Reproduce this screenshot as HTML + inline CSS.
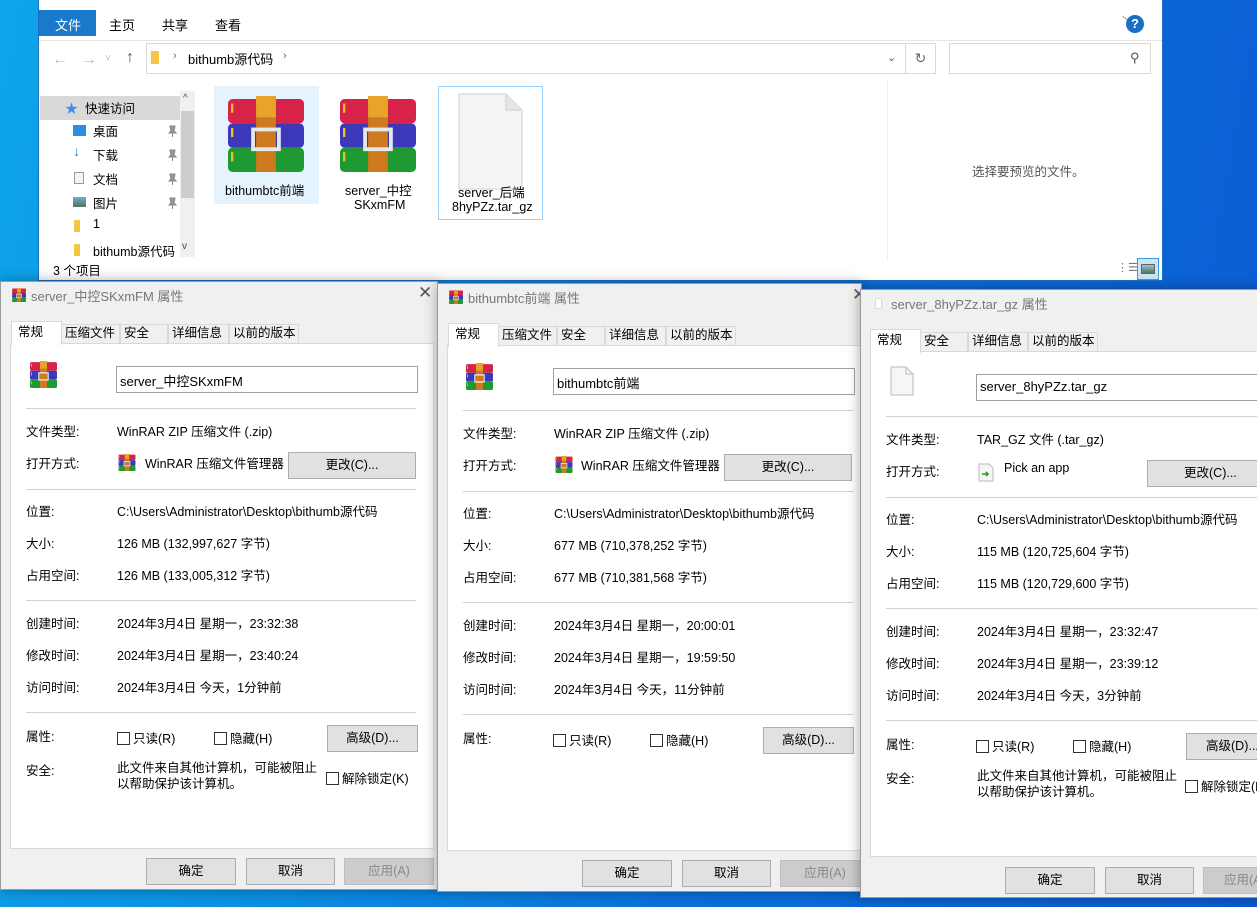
<!DOCTYPE html>
<html><head><meta charset="utf-8">
<style>
*{margin:0;padding:0;box-sizing:border-box}
body{width:1257px;height:907px;overflow:hidden;position:relative;font-family:"Liberation Sans","Noto Sans CJK SC",sans-serif;font-size:12.5px;color:#000;
background:linear-gradient(100deg,#0ea4ea 0%,#0a8ee3 30%,#0b6fd9 60%,#0b5bd3 100%)}
.a{position:absolute;white-space:nowrap}
.ex{position:absolute;left:38px;top:-2px;width:1125px;height:283px;background:#fff;border:1px solid #1c6fbf}
.dlg{position:absolute;width:425px;height:609px;background:#f0f0f0;border:1px solid #9a9a9a;box-shadow:0 0 12px rgba(0,0,0,.35);overflow:hidden}
.dlg .a{margin-top:-3px}
.tt{top:7px;left:30px;color:#777;font-size:13px}
.tab{position:absolute;top:42px;height:20px;background:#f0f0f0;border:1px solid #d9d9d9;font-size:12.5px;line-height:17px;padding:0 0 0 3px;overflow:hidden}
.tab.on{top:39px;height:24px;background:#fff;border-bottom:none;z-index:2;padding:2px 0 0 6px}
.pnl{position:absolute;left:9px;top:61px;width:424px;height:506px;background:#fff;border:1px solid #d9d9d9}
.inp{position:absolute;left:115px;top:84px;width:302px;height:27px;border:1px solid #a0a0a0;background:#fff;padding:4px 0 0 3px;font-size:13px}
.sep{position:absolute;left:25px;width:390px;height:1px;background:#d0d0d0}
.btn{position:absolute;height:27px;background:#e1e1e1;border:1px solid #adadad;text-align:center;line-height:25px;font-size:12.5px}
.cb{display:inline-block;width:13px;height:13px;border:1px solid #333;background:#fff;vertical-align:-2px;margin-right:3px}
.lb{left:25px}.vl{left:116px}
.pin{position:absolute;left:128px;width:10px;height:12px}
</style></head><body>

<svg width="0" height="0" style="position:absolute">
<defs>
<g id="rar">
<rect x="0" y="0" width="100" height="32" rx="6" fill="#d7234a"/>
<rect x="0" y="32" width="100" height="32" rx="6" fill="#3b38b9"/>
<rect x="0" y="64" width="100" height="32" rx="6" fill="#1f9a32"/>
<rect x="4" y="6" width="3" height="12" fill="#f6c21c"/><rect x="4" y="38" width="3" height="12" fill="#f6c21c"/><rect x="4" y="70" width="3" height="12" fill="#f6c21c"/>
<rect x="37" y="-4" width="26" height="100" fill="#cf7a1e"/>
<rect x="37" y="-4" width="26" height="28" fill="#e8a42a"/>
<rect x="33" y="40" width="34" height="26" fill="none" stroke="#e8e8e8" stroke-width="5"/>
</g>
<g id="pin"><path d="M3 1H8L7 6L9 8H2L4 6Z M5.5 8V12" fill="#999" stroke="#888" stroke-width="1"/></g>
</defs></svg>

<!-- Explorer -->
<div class="ex">
 <div class="a" style="left:0;top:11px;width:57px;height:26px;background:#1979ca;color:#fff;font-size:13px;padding:5px 0 0 16px">文件</div>
 <div class="a" style="left:70px;top:16px;font-size:13px">主页</div>
 <div class="a" style="left:123px;top:16px;font-size:13px">共享</div>
 <div class="a" style="left:176px;top:16px;font-size:13px">查看</div>
 <div class="a" style="left:1083px;top:14px;color:#888;font-size:12px">﹀</div>
 <div class="a" style="left:1087px;top:16px;width:18px;height:18px;border-radius:50%;background:#1a6fc4;color:#fff;font-weight:bold;text-align:center;line-height:18px;font-size:13px">?</div>
 <div class="a" style="left:0;top:41px;width:1123px;height:1px;background:#e5e5e5"></div>
 <div class="a" style="left:13px;top:52px;color:#bbb;font-size:16px">←</div>
 <div class="a" style="left:42px;top:52px;color:#bbb;font-size:16px">→</div>
 <div class="a" style="left:66px;top:54px;color:#bbb;font-size:10px">˅</div>
 <div class="a" style="left:87px;top:50px;color:#555;font-size:16px">↑</div>
 <div class="a" style="left:107px;top:44px;width:760px;height:31px;border:1px solid #d9d9d9"></div>
 <div class="a" style="left:112px;top:52px;width:8px;height:13px;background:#f3c643"></div>
 <div class="a" style="left:134px;top:51px;color:#666;font-size:11px">›</div>
 <div class="a" style="left:149px;top:50px;font-size:13px">bithumb源代码</div>
 <div class="a" style="left:244px;top:51px;color:#666;font-size:11px">›</div>
 <div class="a" style="left:848px;top:52px;color:#555;font-size:11px">⌄</div>
 <div class="a" style="left:866px;top:44px;width:31px;height:31px;border:1px solid #d9d9d9;text-align:center;line-height:29px;color:#666;font-size:14px">↻</div>
 <div class="a" style="left:910px;top:44px;width:202px;height:31px;border:1px solid #d9d9d9"></div>
 <div class="a" style="left:1091px;top:51px;color:#555;font-size:13px">⚲</div>
 <!-- nav -->
 <div class="a" style="left:1px;top:97px;width:140px;height:24px;background:#d9d9d9"></div>
 <div class="a" style="left:26px;top:99px;color:#3b8ee5;font-size:13px">★</div>
 <div class="a" style="left:46px;top:99px;font-size:12.5px">快速访问</div>
 <div class="a" style="left:34px;top:126px;width:13px;height:11px;background:#2d8ce8"></div>
 <div class="a" style="left:54px;top:122px">桌面</div>
 <div class="a" style="left:34px;top:144px;color:#2d7fd9;font-size:14px;font-weight:bold">↓</div>
 <div class="a" style="left:54px;top:146px">下载</div>
 <div class="a" style="left:35px;top:173px;width:10px;height:12px;border:1px solid #999;background:#f4f4f4"></div>
 <div class="a" style="left:54px;top:170px">文档</div>
 <div class="a" style="left:34px;top:198px;width:13px;height:10px;background:linear-gradient(#7aa7d6,#4b7d4b)"></div>
 <div class="a" style="left:54px;top:194px">图片</div>
 <svg class="pin" style="top:126px"><use href="#pin"/></svg>
 <svg class="pin" style="top:150px"><use href="#pin"/></svg>
 <svg class="pin" style="top:174px"><use href="#pin"/></svg>
 <svg class="pin" style="top:198px"><use href="#pin"/></svg>
 <div class="a" style="left:35px;top:221px;width:6px;height:12px;background:#f3c643"></div>
 <div class="a" style="left:54px;top:218px">1</div>
 <div class="a" style="left:35px;top:245px;width:6px;height:12px;background:#f3c643"></div>
 <div class="a" style="left:54px;top:242px">bithumb源代码</div>
 <div class="a" style="left:141px;top:92px;width:15px;height:166px;background:#f0f0f0"></div>
 <div class="a" style="left:142px;top:112px;width:13px;height:87px;background:#cdcdcd"></div>
 <div class="a" style="left:144px;top:94px;font-size:10px;color:#444">^</div>
 <div class="a" style="left:143px;top:242px;font-size:10px;color:#444">v</div>
 <div class="a" style="left:14px;top:261px">3 个项目</div>
 <!-- files -->
 <div class="a" style="left:175px;top:87px;width:105px;height:118px;background:#e5f3ff"></div>
 <svg class="a" style="left:181px;top:97px" width="92" height="76" viewBox="0 -4 100 100"><use href="#rar"/></svg>
 <div class="a" style="left:186px;top:181px">bithumbtc前端</div>
 <svg class="a" style="left:293px;top:97px" width="92" height="76" viewBox="0 -4 100 100"><use href="#rar"/></svg>
 <div class="a" style="left:306px;top:181px">server_中控</div>
 <div class="a" style="left:315px;top:199px">SKxmFM</div>
 <div class="a" style="left:399px;top:87px;width:105px;height:134px;border:1px solid #99d1ff"></div>
 <svg class="a" style="left:419px;top:94px" width="66" height="98"><path d="M1 1H48L64 17V96H1Z" fill="#f4f4f4" stroke="#d0d0d0"/><path d="M48 1V17H64" fill="#e6e6e6" stroke="#d0d0d0"/></svg>
 <div class="a" style="left:419px;top:183px">server_后端</div>
 <div class="a" style="left:413px;top:201px">8hyPZz.tar_gz</div>
 <div class="a" style="left:848px;top:82px;width:1px;height:180px;background:#eee"></div>
 <div class="a" style="left:933px;top:162px;color:#555">选择要预览的文件。</div>
 <div class="a" style="left:1078px;top:262px;color:#777;font-size:11px">⋮☰</div>
 <div class="a" style="left:1098px;top:259px;width:22px;height:22px;border:1px solid #3c9be0;background:#cce4f7"></div>
 <div class="a" style="left:1102px;top:265px;width:14px;height:10px;background:linear-gradient(#9ec0e0,#4c7a4c);border:1px solid #666"></div>
</div>

<!-- Dialog 1 -->
<div class="dlg" style="left:0;top:281px;width:438px">
 <svg class="a" style="left:10px;top:9px" width="16" height="14" viewBox="0 -4 100 100"><use href="#rar"/></svg>
 <div class="a tt">server_中控SKxmFM 属性</div>
 <div class="a" style="left:417px;top:4px;color:#555;font-size:17px">✕</div>
 <div class="tab on" style="left:10px;width:51px">常规</div>
 <div class="tab" style="left:60px;width:59px">压缩文件</div>
 <div class="tab" style="left:119px;width:48px">安全</div>
 <div class="tab" style="left:167px;width:61px">详细信息</div>
 <div class="tab" style="left:228px;width:70px">以前的版本</div>
 <div class="pnl"></div>
 <svg class="a" style="left:26px;top:82px" width="33" height="27" viewBox="0 -4 100 100"><use href="#rar"/></svg>
 <div class="inp">server_中控SKxmFM</div>
 <div class="sep" style="top:126px"></div>
 <div class="a lb" style="top:142px">文件类型:</div><div class="a vl" style="top:142px">WinRAR ZIP 压缩文件 (.zip)</div>
 <div class="a lb" style="top:174px">打开方式:</div>
 <svg class="a" style="left:116px;top:175px" width="20" height="17" viewBox="0 -4 100 100"><use href="#rar"/></svg>
 <div class="a" style="left:144px;top:174px">WinRAR 压缩文件管理器</div>
 <div class="btn" style="left:287px;top:170px;width:128px">更改(C)...</div>
 <div class="sep" style="top:207px"></div>
 <div class="a lb" style="top:222px">位置:</div><div class="a vl" style="top:222px">C:\Users\Administrator\Desktop\bithumb源代码</div>
 <div class="a lb" style="top:254px">大小:</div><div class="a vl" style="top:254px">126 MB (132,997,627 字节)</div>
 <div class="a lb" style="top:286px">占用空间:</div><div class="a vl" style="top:286px">126 MB (133,005,312 字节)</div>
 <div class="sep" style="top:318px"></div>
 <div class="a lb" style="top:334px">创建时间:</div><div class="a vl" style="top:334px">2024年3月4日 星期一，23:32:38</div>
 <div class="a lb" style="top:366px">修改时间:</div><div class="a vl" style="top:366px">2024年3月4日 星期一，23:40:24</div>
 <div class="a lb" style="top:398px">访问时间:</div><div class="a vl" style="top:398px">2024年3月4日 今天，1分钟前</div>
 <div class="sep" style="top:430px"></div>
 <div class="a lb" style="top:447px">属性:</div>
 <div class="a" style="left:116px;top:449px"><span class="cb"></span>只读(R)</div>
 <div class="a" style="left:213px;top:449px"><span class="cb"></span>隐藏(H)</div>
 <div class="btn" style="left:326px;top:443px;width:91px">高级(D)...</div>
 <div class="a lb" style="top:481px">安全:</div>
 <div class="a vl" style="top:481px;line-height:16px">此文件来自其他计算机，可能被阻止<br>以帮助保护该计算机。</div>
 <div class="a" style="left:325px;top:489px"><span class="cb"></span>解除锁定(K)</div>
 <div class="btn" style="left:145px;top:576px;width:90px">确定</div>
 <div class="btn" style="left:245px;top:576px;width:89px">取消</div>
 <div class="btn" style="left:343px;top:576px;width:90px;background:#ccc;border-color:#bfbfbf;color:#888">应用(A)</div>
</div>

<!-- Dialog 2 -->
<div class="dlg" style="left:437px;top:283px">
 <svg class="a" style="left:10px;top:9px" width="16" height="14" viewBox="0 -4 100 100"><use href="#rar"/></svg>
 <div class="a tt">bithumbtc前端 属性</div>
 <div class="a" style="left:414px;top:4px;color:#555;font-size:17px">✕</div>
 <div class="tab on" style="left:10px;width:51px">常规</div>
 <div class="tab" style="left:60px;width:59px">压缩文件</div>
 <div class="tab" style="left:119px;width:48px">安全</div>
 <div class="tab" style="left:167px;width:61px">详细信息</div>
 <div class="tab" style="left:228px;width:70px">以前的版本</div>
 <div class="pnl"></div>
 <svg class="a" style="left:25px;top:82px" width="33" height="27" viewBox="0 -4 100 100"><use href="#rar"/></svg>
 <div class="inp">bithumbtc前端</div>
 <div class="sep" style="top:126px"></div>
 <div class="a lb" style="top:142px">文件类型:</div><div class="a vl" style="top:142px">WinRAR ZIP 压缩文件 (.zip)</div>
 <div class="a lb" style="top:174px">打开方式:</div>
 <svg class="a" style="left:116px;top:175px" width="20" height="17" viewBox="0 -4 100 100"><use href="#rar"/></svg>
 <div class="a" style="left:143px;top:174px">WinRAR 压缩文件管理器</div>
 <div class="btn" style="left:286px;top:170px;width:128px">更改(C)...</div>
 <div class="sep" style="top:207px"></div>
 <div class="a lb" style="top:222px">位置:</div><div class="a vl" style="top:222px">C:\Users\Administrator\Desktop\bithumb源代码</div>
 <div class="a lb" style="top:254px">大小:</div><div class="a vl" style="top:254px">677 MB (710,378,252 字节)</div>
 <div class="a lb" style="top:286px">占用空间:</div><div class="a vl" style="top:286px">677 MB (710,381,568 字节)</div>
 <div class="sep" style="top:318px"></div>
 <div class="a lb" style="top:334px">创建时间:</div><div class="a vl" style="top:334px">2024年3月4日 星期一，20:00:01</div>
 <div class="a lb" style="top:366px">修改时间:</div><div class="a vl" style="top:366px">2024年3月4日 星期一，19:59:50</div>
 <div class="a lb" style="top:398px">访问时间:</div><div class="a vl" style="top:398px">2024年3月4日 今天，11分钟前</div>
 <div class="sep" style="top:430px"></div>
 <div class="a lb" style="top:447px">属性:</div>
 <div class="a" style="left:115px;top:449px"><span class="cb"></span>只读(R)</div>
 <div class="a" style="left:212px;top:449px"><span class="cb"></span>隐藏(H)</div>
 <div class="btn" style="left:325px;top:443px;width:91px">高级(D)...</div>
 <div class="btn" style="left:144px;top:576px;width:90px">确定</div>
 <div class="btn" style="left:244px;top:576px;width:89px">取消</div>
 <div class="btn" style="left:342px;top:576px;width:90px;background:#ccc;border-color:#bfbfbf;color:#888">应用(A)</div>
</div>

<!-- Dialog 3 -->
<div class="dlg" style="left:860px;top:289px;width:440px">
 <div class="a" style="left:14px;top:11px;width:7px;height:11px;background:#fff;border:1px solid #ddd"></div>
 <div class="a tt">server_8hyPZz.tar_gz 属性</div>
 <div class="tab on" style="left:9px;width:51px">常规</div>
 <div class="tab" style="left:59px;width:48px">安全</div>
 <div class="tab" style="left:107px;width:60px">详细信息</div>
 <div class="tab" style="left:167px;width:70px">以前的版本</div>
 <div class="pnl" style="width:440px"></div>
 <svg class="a" style="left:29px;top:79px" width="24" height="30"><path d="M1 1H16L23 8V29H1Z" fill="#f6f6f6" stroke="#bbb"/><path d="M16 1V8H23" fill="none" stroke="#bbb"/></svg>
 <div class="inp" style="width:320px">server_8hyPZz.tar_gz</div>
 <div class="sep" style="top:126px;width:420px"></div>
 <div class="a lb" style="top:142px">文件类型:</div><div class="a vl" style="top:142px">TAR_GZ 文件 (.tar_gz)</div>
 <div class="a lb" style="top:174px">打开方式:</div>
 <svg class="a" style="left:117px;top:176px" width="16" height="19"><path d="M1 1H11L15 5V18H1Z" fill="#f6f6f6" stroke="#bbb"/><path d="M4 11H10M8 9L10 11L8 13" stroke="#2a9a2a" stroke-width="1.6" fill="none"/></svg>
 <div class="a" style="left:143px;top:174px">Pick an app</div>
 <div class="btn" style="left:286px;top:170px;width:140px;text-align:left;padding-left:36px">更改(C)...</div>
 <div class="sep" style="top:207px;width:420px"></div>
 <div class="a lb" style="top:222px">位置:</div><div class="a vl" style="top:222px">C:\Users\Administrator\Desktop\bithumb源代码</div>
 <div class="a lb" style="top:254px">大小:</div><div class="a vl" style="top:254px">115 MB (120,725,604 字节)</div>
 <div class="a lb" style="top:286px">占用空间:</div><div class="a vl" style="top:286px">115 MB (120,729,600 字节)</div>
 <div class="sep" style="top:318px;width:420px"></div>
 <div class="a lb" style="top:334px">创建时间:</div><div class="a vl" style="top:334px">2024年3月4日 星期一，23:32:47</div>
 <div class="a lb" style="top:366px">修改时间:</div><div class="a vl" style="top:366px">2024年3月4日 星期一，23:39:12</div>
 <div class="a lb" style="top:398px">访问时间:</div><div class="a vl" style="top:398px">2024年3月4日 今天，3分钟前</div>
 <div class="sep" style="top:430px;width:420px"></div>
 <div class="a lb" style="top:447px">属性:</div>
 <div class="a" style="left:115px;top:449px"><span class="cb"></span>只读(R)</div>
 <div class="a" style="left:212px;top:449px"><span class="cb"></span>隐藏(H)</div>
 <div class="btn" style="left:325px;top:443px;width:100px;text-align:left;padding-left:19px">高级(D)...</div>
 <div class="a lb" style="top:481px">安全:</div>
 <div class="a vl" style="top:481px;line-height:16px">此文件来自其他计算机，可能被阻止<br>以帮助保护该计算机。</div>
 <div class="a" style="left:324px;top:489px"><span class="cb"></span>解除锁定(K)</div>
 <div class="btn" style="left:144px;top:577px;width:90px">确定</div>
 <div class="btn" style="left:244px;top:577px;width:89px">取消</div>
 <div class="btn" style="left:342px;top:577px;width:90px;background:#ccc;border-color:#bfbfbf;color:#888;text-align:left;padding-left:20px">应用(A)</div>
</div>
</body></html>
